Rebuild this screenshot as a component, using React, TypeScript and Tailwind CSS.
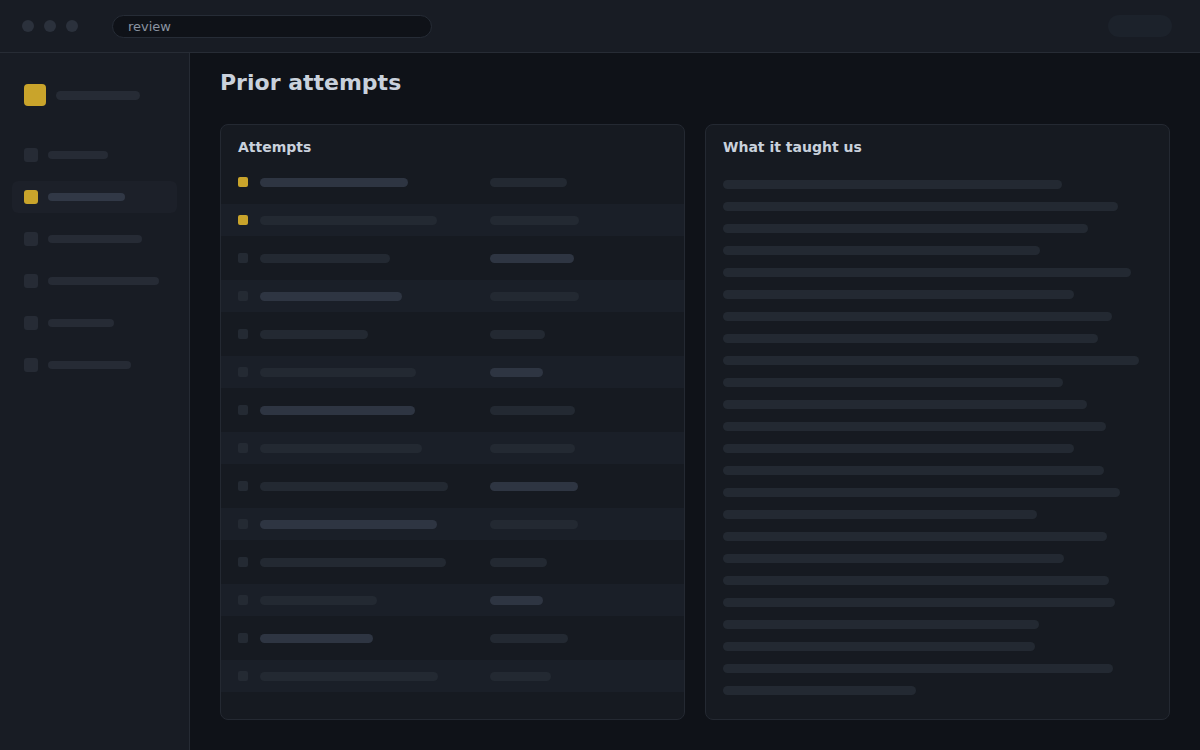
import React from "react";

const navBars = [60, 77, 94, 111, 66, 83];

const attempts: { a: number; b: number; flag?: boolean }[] = [
  { a: 148, b: 77, flag: true },
  { a: 177, b: 89, flag: true },
  { a: 130, b: 84 },
  { a: 142, b: 89 },
  { a: 108, b: 55 },
  { a: 156, b: 53 },
  { a: 155, b: 85 },
  { a: 162, b: 85 },
  { a: 188, b: 88 },
  { a: 177, b: 88 },
  { a: 186, b: 57 },
  { a: 117, b: 53 },
  { a: 113, b: 78 },
  { a: 178, b: 61 },
];

const lessonEnds = [
  1062, 1118, 1088, 1040, 1131, 1074, 1112, 1098, 1139, 1063, 1087, 1106,
  1074, 1104, 1120, 1037, 1107, 1064, 1109, 1115, 1039, 1035, 1113, 916,
];

const font = { fontFamily: '"DejaVu Sans", "Noto Sans", sans-serif' };

export default function App() {
  return (
    <div className="w-[1200px] h-[750px] flex flex-col bg-[#0f1218] overflow-hidden" style={font}>
      {/* window chrome */}
      <div className="h-[53px] shrink-0 flex items-center bg-[#181c24] border-b border-[#272c35] px-[22px]">
        <div className="flex gap-[10px]">
          <div className="w-3 h-3 rounded-full bg-[#2b313c]" />
          <div className="w-3 h-3 rounded-full bg-[#2b313c]" />
          <div className="w-3 h-3 rounded-full bg-[#2b313c]" />
        </div>
        <div className="ml-[34px] w-[320px] h-[23px] rounded-full bg-[#0f1218] border border-[#262c36] flex items-center pl-[15px]">
          <span className="text-[13px] text-[#8b94a1] leading-none">review</span>
        </div>
        <div className="ml-auto mr-[6px] w-[64px] h-[22px] rounded-full bg-[#1c222b]" />
      </div>

      <div className="flex flex-1 min-h-0">
        {/* sidebar */}
        <aside className="w-[190px] shrink-0 bg-[#181c24] border-r border-[#262b34] px-3 pt-[31px]">
          <div className="flex items-center gap-[10px] px-3">
            <div className="w-[22px] h-[22px] rounded-[4px] bg-[#c9a42b]" />
            <div className="w-[84px] h-[9px] rounded-full bg-[#262b35]" />
          </div>
          <div className="mt-[33px] flex flex-col gap-[10px]">
            {navBars.map((w, i) => {
              const active = i === 1;
              return (
                <div
                  key={i}
                  className={
                    active
                      ? "h-[32px] rounded-[6px] bg-[#1c2029] flex items-center gap-[10px] px-3"
                      : "h-[32px] rounded-[6px] flex items-center gap-[10px] px-3"
                  }
                >
                  <div className={active ? "w-[14px] h-[14px] rounded-[3px] bg-[#c9a42b]" : "w-[14px] h-[14px] rounded-[3px] bg-[#262b35]"} />
                  <div
                    className={active ? "h-2 rounded-full bg-[#313846]" : "h-2 rounded-full bg-[#262b35]"}
                    style={{ width: w }}
                  />
                </div>
              );
            })}
          </div>
        </aside>

        {/* main */}
        <main className="flex-1 flex flex-col px-[30px] pt-[16px] pb-[30px] min-w-0">
          <h1 className="text-[22px] leading-[28px] font-bold text-[#c9d1dc]">Prior attempts</h1>
          <div className="mt-[27px] flex-1 grid grid-cols-2 gap-5 min-h-0">
            {/* attempts */}
            <section className="rounded-[8px] border border-[#242932] bg-[#161a21] pt-[12px]">
              <h2 className="px-[17px] text-[14px] leading-[20px] font-bold text-[#c9d1dc]">Attempts</h2>
              <div className="mt-[9px] flex flex-col gap-[6px]">
                {attempts.map((r, i) => {
                  const firstBright = i % 3 === 0;
                  const secondBright = i % 3 === 2;
                  return (
                    <div
                      key={i}
                      className={i % 2 === 1 ? "h-8 flex items-center px-[17px] bg-[#1a1f28]" : "h-8 flex items-center px-[17px]"}
                    >
                      <div className={r.flag ? "w-[10px] h-[10px] rounded-[2px] bg-[#c9a42b]" : "w-[10px] h-[10px] rounded-[2px] bg-[#242a33]"} />
                      <div className="ml-3 w-[230px]">
                        <div
                          className={firstBright ? "h-[9px] rounded-full bg-[#2e3542]" : "h-[9px] rounded-full bg-[#232932]"}
                          style={{ width: r.a }}
                        />
                      </div>
                      <div
                        className={secondBright ? "h-[9px] rounded-full bg-[#2e3542]" : "h-[9px] rounded-full bg-[#232932]"}
                        style={{ width: r.b }}
                      />
                    </div>
                  );
                })}
              </div>
            </section>

            {/* lessons */}
            <section className="rounded-[8px] border border-[#242932] bg-[#161a21] pt-[12px] px-[17px]">
              <h2 className="text-[14px] leading-[20px] font-bold text-[#c9d1dc]">What it taught us</h2>
              <div className="mt-[23px] flex flex-col gap-[13px]">
                {lessonEnds.map((end, i) => (
                  <div key={i} className="h-[9px] rounded-full bg-[#232932]" style={{ width: end - 723 }} />
                ))}
              </div>
            </section>
          </div>
        </main>
      </div>
    </div>
  );
}
